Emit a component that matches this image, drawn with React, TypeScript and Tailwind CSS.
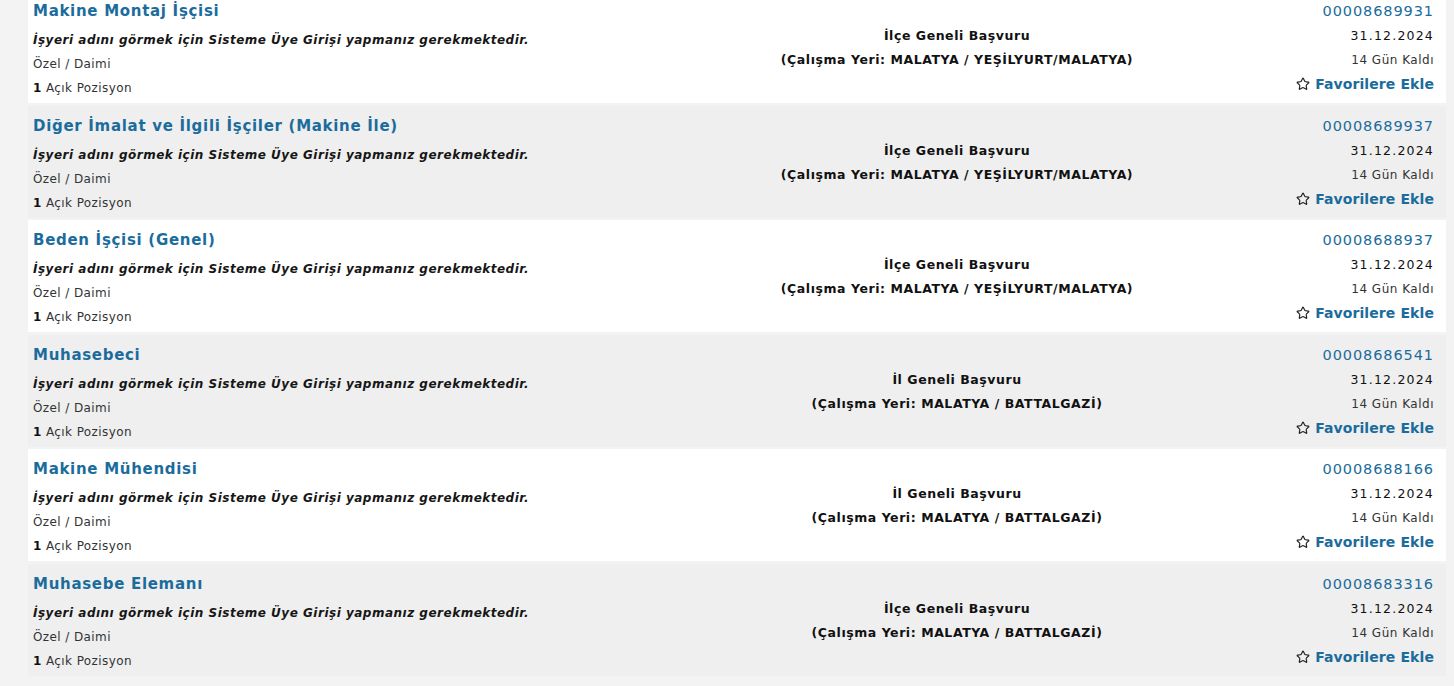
import React from 'react'
import { Star } from 'lucide-react'

interface Job {
  title: string
  scope: string
  place: string
  no: string
}

const jobs: Job[] = [
  { title: 'Makine Montaj İşçisi', scope: 'İlçe Geneli Başvuru', place: 'MALATYA / YEŞİLYURT/MALATYA', no: '00008689931' },
  { title: 'Diğer İmalat ve İlgili İşçiler (Makine İle)', scope: 'İlçe Geneli Başvuru', place: 'MALATYA / YEŞİLYURT/MALATYA', no: '00008689937' },
  { title: 'Beden İşçisi (Genel)', scope: 'İlçe Geneli Başvuru', place: 'MALATYA / YEŞİLYURT/MALATYA', no: '00008688937' },
  { title: 'Muhasebeci', scope: 'İl Geneli Başvuru', place: 'MALATYA / BATTALGAZİ', no: '00008686541' },
  { title: 'Makine Mühendisi', scope: 'İl Geneli Başvuru', place: 'MALATYA / BATTALGAZİ', no: '00008688166' },
  { title: 'Muhasebe Elemanı', scope: 'İlçe Geneli Başvuru', place: 'MALATYA / BATTALGAZİ', no: '00008683316' },
]

function JobRow({ job, odd }: { job: Job; odd: boolean }) {
  return (
    <div
      className={`grid grid-cols-[700px_458px_1fr] h-[112px] ${odd ? 'bg-[#efefef]' : 'bg-white'}`}
    >
      {/* sol: başlık ve açıklama */}
      <div className="pl-[5px] pt-[10px] flex flex-col">
        <div className="text-[15px] font-bold text-[#1b6c9c] leading-[20px] tracking-[0.7px]">{job.title}</div>
        <div className="mt-[9px] text-[12px] italic font-bold text-[#161616] leading-[20px] tracking-[0.5px]">
          İşyeri adını görmek için Sisteme Üye Girişi yapmanız gerekmektedir.
        </div>
        <div className="mt-[4px] text-[12px] text-[#333] leading-[20px] tracking-[0.4px]">Özel / Daimi</div>
        <div className="mt-[4px] text-[12px] text-[#333] leading-[20px] tracking-[0.4px]">
          <span className="font-bold text-[#111]">1</span> Açık Pozisyon
        </div>
      </div>

      {/* orta: başvuru kapsamı */}
      <div className="flex flex-col items-center pt-[35px] text-[12.5px] text-[#111] leading-[20px] font-semibold tracking-[0.55px]">
        <div>{job.scope}</div>
        <div className="mt-[4px]">(Çalışma Yeri: {job.place})</div>
      </div>

      {/* sağ: ilan no, tarih, favori */}
      <div className="flex flex-col items-end pr-[12px] pt-[10px] leading-[20px]">
        <div className="text-[14.5px] text-[#1b6c9c] tracking-[0.9px]">{job.no}</div>
        <div className="mt-[5px] text-[12.5px] text-[#111] tracking-[1.2px]">31.12.2024</div>
        <div className="mt-[4px] text-[12px] text-[#333] tracking-[0.5px]">14 Gün Kaldı</div>
        <div className="mt-[4px] flex items-center gap-[5px]">
          <Star className="w-[14px] h-[14px] text-[#222]" strokeWidth={2} />
          <span className="text-[14px] text-[#1b6c9c] font-semibold tracking-[0.1px]">Favorilere Ekle</span>
        </div>
      </div>
    </div>
  )
}

export default function App() {
  return (
    <div
      className="w-[1454px] h-[686px] overflow-hidden bg-[#f3f3f3]"
      style={{ fontFamily: '"DejaVu Sans", Verdana, sans-serif' }}
    >
      <div className="-mt-[9px] ml-[28px] mr-[8px] flex flex-col gap-[2.5px]">
        {jobs.map((job, i) => (
          <JobRow key={job.no} job={job} odd={i % 2 === 1} />
        ))}
      </div>
    </div>
  )
}
